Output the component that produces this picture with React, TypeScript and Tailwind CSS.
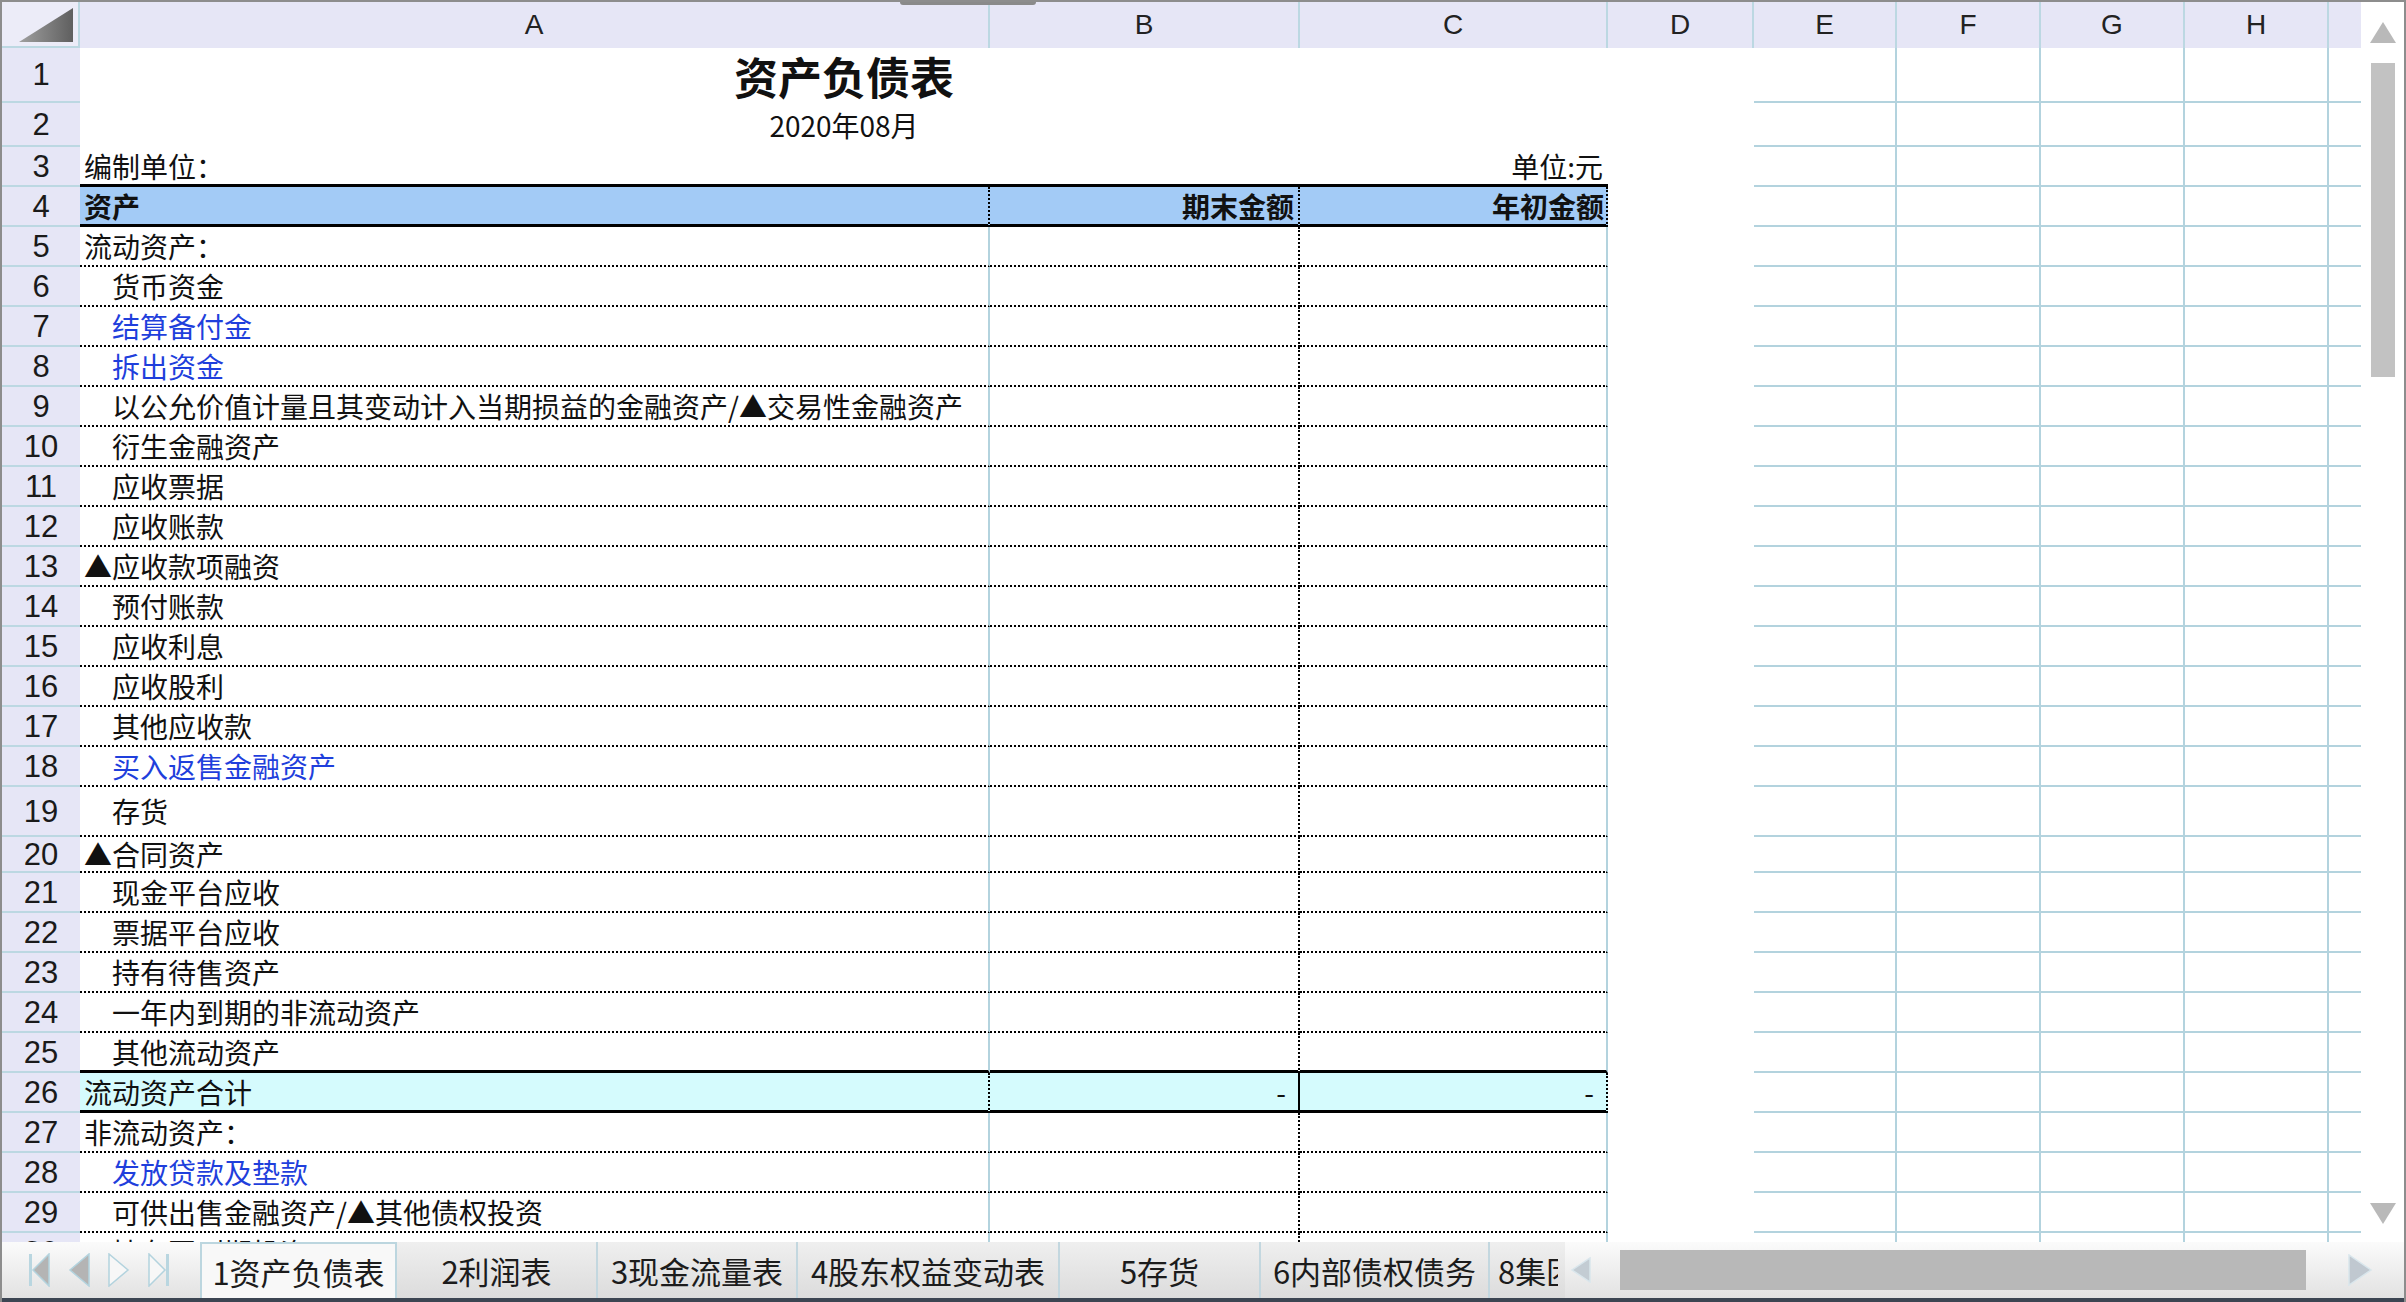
import React from 'react';

type Kind = 'title' | 'date' | 'unit' | 'head' | 'item' | 'total';

interface SheetRow {
  n: number;
  h: string;
  kind: Kind;
  text?: string;
  indent?: boolean;
  blue?: boolean;
  thick?: boolean;
}

const rows: SheetRow[] = [
  { n: 1, h: 'h-[55px]', kind: 'title' },
  { n: 2, h: 'h-[44px]', kind: 'date' },
  { n: 3, h: 'h-[40px]', kind: 'unit' },
  { n: 4, h: 'h-[40px]', kind: 'head' },
  { n: 5, h: 'h-[40px]', kind: 'item', text: '流动资产：' },
  { n: 6, h: 'h-[40px]', kind: 'item', text: '货币资金', indent: true },
  { n: 7, h: 'h-[40px]', kind: 'item', text: '结算备付金', indent: true, blue: true },
  { n: 8, h: 'h-[40px]', kind: 'item', text: '拆出资金', indent: true, blue: true },
  { n: 9, h: 'h-[40px]', kind: 'item', text: '以公允价值计量且其变动计入当期损益的金融资产/▲交易性金融资产', indent: true },
  { n: 10, h: 'h-[40px]', kind: 'item', text: '衍生金融资产', indent: true },
  { n: 11, h: 'h-[40px]', kind: 'item', text: '应收票据', indent: true },
  { n: 12, h: 'h-[40px]', kind: 'item', text: '应收账款', indent: true },
  { n: 13, h: 'h-[40px]', kind: 'item', text: '▲应收款项融资' },
  { n: 14, h: 'h-[40px]', kind: 'item', text: '预付账款', indent: true },
  { n: 15, h: 'h-[40px]', kind: 'item', text: '应收利息', indent: true },
  { n: 16, h: 'h-[40px]', kind: 'item', text: '应收股利', indent: true },
  { n: 17, h: 'h-[40px]', kind: 'item', text: '其他应收款', indent: true },
  { n: 18, h: 'h-[40px]', kind: 'item', text: '买入返售金融资产', indent: true, blue: true },
  { n: 19, h: 'h-[50px]', kind: 'item', text: '存货', indent: true },
  { n: 20, h: 'h-[36px]', kind: 'item', text: '▲合同资产' },
  { n: 21, h: 'h-[40px]', kind: 'item', text: '现金平台应收', indent: true },
  { n: 22, h: 'h-[40px]', kind: 'item', text: '票据平台应收', indent: true },
  { n: 23, h: 'h-[40px]', kind: 'item', text: '持有待售资产', indent: true },
  { n: 24, h: 'h-[40px]', kind: 'item', text: '一年内到期的非流动资产', indent: true },
  { n: 25, h: 'h-[40px]', kind: 'item', text: '其他流动资产', indent: true, thick: true },
  { n: 26, h: 'h-[40px]', kind: 'total', text: '流动资产合计' },
  { n: 27, h: 'h-[40px]', kind: 'item', text: '非流动资产：' },
  { n: 28, h: 'h-[40px]', kind: 'item', text: '发放贷款及垫款', indent: true, blue: true },
  { n: 29, h: 'h-[40px]', kind: 'item', text: '可供出售金融资产/▲其他债权投资', indent: true },
  { n: 30, h: 'h-[40px]', kind: 'item', text: '持有至到期投资', indent: true },
];

const columns = [
  { id: 'A', w: 'w-[910px]' },
  { id: 'B', w: 'w-[310px]' },
  { id: 'C', w: 'w-[308px]' },
  { id: 'D', w: 'w-[146px]' },
  { id: 'E', w: 'w-[143px]' },
  { id: 'F', w: 'w-[144px]' },
  { id: 'G', w: 'w-[144px]' },
  { id: 'H', w: 'w-[144px]' },
];

const tabs = [
  { label: '1资产负债表', w: 'w-[197px]' },
  { label: '2利润表', w: 'w-[201px]' },
  { label: '3现金流量表', w: 'w-[200px]' },
  { label: '4股东权益变动表', w: 'w-[262px]' },
  { label: '5存货', w: 'w-[201px]' },
  { label: '6内部债权债务', w: 'w-[229px]' },
];

// border pieces (mixed styles per side)
const B_DOT = 'border-b-2 border-b-black [border-bottom-style:dotted]';
const B_THICK = 'border-b-[3px] border-b-black';
const R_BLUE = 'border-r-2 border-r-[#b3d3de]';
const R_DOT = 'border-r-2 border-r-black [border-right-style:dotted]';
const R_SOLID = 'border-r-2 border-r-black';

const cell = 'h-full shrink-0 flex items-center whitespace-nowrap';

function DataCells({ row }: { row: SheetRow }) {
  switch (row.kind) {
    case 'title':
      return (
        <div className={`${cell} w-[1528px] justify-center text-[44px] font-bold`}>资产负债表</div>
      );
    case 'date':
      return <div className={`${cell} w-[1528px] justify-center`}>2020年08月</div>;
    case 'unit':
      return (
        <>
          <div className={`${cell} w-[910px] pl-[4px] ${B_THICK}`}>编制单位：</div>
          <div className={`${cell} w-[310px] ${B_THICK}`} />
          <div className={`${cell} w-[308px] justify-end pr-[5px] ${B_THICK}`}>单位:元</div>
        </>
      );
    case 'head':
      return (
        <>
          <div className={`${cell} w-[910px] pl-[4px] font-bold bg-[#a3cbf6] ${B_THICK} ${R_DOT}`}>资产</div>
          <div className={`${cell} w-[310px] justify-end pr-[4px] font-bold bg-[#a3cbf6] ${B_THICK} ${R_DOT}`}>期末金额</div>
          <div className={`${cell} w-[308px] justify-end pr-[2px] font-bold bg-[#a3cbf6] ${B_THICK} ${R_DOT}`}>年初金额</div>
        </>
      );
    case 'total':
      return (
        <>
          <div className={`${cell} w-[910px] pl-[4px] bg-[#d5fbfd] ${B_THICK} ${R_DOT}`}>{row.text}</div>
          <div className={`${cell} w-[310px] justify-end pr-[12px] bg-[#d5fbfd] ${B_THICK} ${R_SOLID}`}>-</div>
          <div className={`${cell} w-[308px] justify-end pr-[12px] bg-[#d5fbfd] ${B_THICK} ${R_DOT}`}>-</div>
        </>
      );
    default: {
      const bottom = row.thick ? B_THICK : B_DOT;
      return (
        <>
          <div
            className={`${cell} w-[910px] ${row.indent ? 'pl-[32px]' : 'pl-[4px]'} ${
              row.blue ? 'text-[#1f3fdc]' : ''
            } ${bottom} ${R_BLUE}`}
          >
            {row.text}
          </div>
          <div className={`${cell} w-[310px] ${bottom} ${R_DOT}`} />
          <div className={`${cell} w-[308px] ${bottom} ${R_BLUE}`} />
        </>
      );
    }
  }
}

function Row({ row }: { row: SheetRow }) {
  return (
    <div className={`flex shrink-0 ${row.h}`}>
      <div className="h-full w-[78px] shrink-0 flex items-center justify-center bg-[#e6e6f6] border-b-2 border-[#bcd8e2] font-['Liberation_Sans',sans-serif] text-[31px] text-[#1a1a1a]">
        {row.n}
      </div>
      <DataCells row={row} />
      <div className="h-full w-[146px] shrink-0" />
      <div className="h-full w-[143px] shrink-0 border-b-2 border-r-2 border-[#b3d3de]" />
      <div className="h-full w-[144px] shrink-0 border-b-2 border-r-2 border-[#b3d3de]" />
      <div className="h-full w-[144px] shrink-0 border-b-2 border-r-2 border-[#b3d3de]" />
      <div className="h-full w-[144px] shrink-0 border-b-2 border-r-2 border-[#b3d3de]" />
      <div className="h-full w-[32px] shrink-0 border-b-2 border-[#b3d3de]" />
    </div>
  );
}

function NavFirst() {
  return (
    <svg width="22" height="34" viewBox="0 0 22 34">
      <rect x="1" y="1" width="3" height="32" fill="#b9d6e0" />
      <polygon points="21,1 21,33 5,17" fill="#b4b4b4" stroke="#b3d3de" strokeWidth="1.5" />
    </svg>
  );
}

function NavPrev() {
  return (
    <svg width="22" height="34" viewBox="0 0 22 34">
      <polygon points="21,1 21,33 2,17" fill="#b4b4b4" stroke="#b3d3de" strokeWidth="1.5" />
    </svg>
  );
}

function NavNext() {
  return (
    <svg width="22" height="34" viewBox="0 0 22 34">
      <polygon points="1,1 1,33 20,17" fill="#f7f7f7" stroke="#b3d3de" strokeWidth="1.5" />
    </svg>
  );
}

function NavLast() {
  return (
    <svg width="22" height="34" viewBox="0 0 22 34">
      <polygon points="1,1 1,33 17,17" fill="#f7f7f7" stroke="#b3d3de" strokeWidth="1.5" />
      <rect x="18" y="1" width="3" height="32" fill="#b9d6e0" />
    </svg>
  );
}

export default function App() {
  return (
    <div className="relative w-[2406px] h-[1302px] flex flex-col bg-white overflow-hidden border-l-2 border-t-2 border-r-2 border-[#8d8d8d] font-['Noto_Sans_CJK_SC',sans-serif] text-[28px] text-[#111] leading-none">
      {/* top handle */}
      <div className="absolute left-[898px] -top-[2px] w-[136px] h-[5px] rounded-b-[3px] bg-[#8a8a8a]" />

      <div className="flex h-[1240px] shrink-0">
        {/* sheet */}
        <div className="w-[2359px] shrink-0 flex flex-col overflow-hidden">
          {/* column headers */}
          <div className="flex h-[46px] shrink-0 font-['Liberation_Sans',sans-serif] text-[28px] text-[#222]">
            <div className="w-[78px] h-full shrink-0 flex items-end justify-end pr-[5px] pb-[4px] bg-[#ececf8] border-r-2 border-b-2 border-[#bcd8e2]">
              <svg width="54" height="34" viewBox="0 0 54 34">
                <defs>
                  <linearGradient id="corner" x1="0" y1="0" x2="1" y2="0">
                    <stop offset="0" stopColor="#a0a0a0" />
                    <stop offset="1" stopColor="#5f5f5f" />
                  </linearGradient>
                </defs>
                <polygon points="54,0 54,34 0,34" fill="url(#corner)" />
              </svg>
            </div>
            {columns.map((c) => (
              <div
                key={c.id}
                className={`${c.w} h-full shrink-0 flex items-center justify-center bg-[#e6e6f6] border-r-2 border-[#bcd8e2]`}
              >
                {c.id}
              </div>
            ))}
            <div className="w-[32px] h-full shrink-0 bg-[#e6e6f6]" />
          </div>

          {rows.map((r) => (
            <Row key={r.n} row={r} />
          ))}
        </div>

        {/* vertical scrollbar */}
        <div className="flex-1 flex flex-col items-center pt-[20px] pb-[18px] bg-white">
          <svg width="26" height="21" viewBox="0 0 26 21">
            <polygon points="13,0 26,21 0,21" fill="#b9b9b9" />
          </svg>
          <div className="mt-[20px] w-[24px] h-[314px] bg-[#c2c2c2]" />
          <div className="flex-1" />
          <svg width="26" height="21" viewBox="0 0 26 21">
            <polygon points="0,0 26,0 13,21" fill="#b9b9b9" />
          </svg>
        </div>
      </div>

      {/* sheet tabs */}
      <div className="flex h-[56px] shrink-0 bg-linear-to-b from-[#fbfbfb] to-[#e2e2e2] text-[31px] text-[#1c1c1c]">
        <div className="w-[198px] h-full shrink-0 flex items-center pl-[26px] gap-[18px]">
          <NavFirst />
          <NavPrev />
          <NavNext />
          <NavLast />
        </div>
        {tabs.map((t, i) =>
          i === 0 ? (
            <div
              key={t.label}
              className={`${t.w} h-full shrink-0 flex items-center justify-center bg-[#f8f8f8] border-x-2 border-t-2 border-[#bcd6df]`}
            >
              {t.label}
            </div>
          ) : (
            <div
              key={t.label}
              className={`${t.w} h-full shrink-0 flex items-center justify-center bg-linear-to-b from-[#efefef] to-[#dcdcdc] border-r-2 border-[#c3d7df]`}
            >
              {t.label}
            </div>
          )
        )}
        <div className="w-[75px] h-full shrink-0 flex items-center pl-[8px] overflow-hidden whitespace-nowrap bg-linear-to-b from-[#efefef] to-[#dcdcdc]">
          <span className="w-[60px] overflow-hidden shrink-0">8集团往来</span>
        </div>
        <div className="flex-1 h-full flex items-center pl-[6px]">
          <svg width="20" height="26" viewBox="0 0 20 26">
            <polygon points="19,1 19,25 1,13" fill="#c3ccd3" stroke="#d9e6ec" strokeWidth="1.5" />
          </svg>
          <div className="ml-[29px] w-[686px] h-[40px] bg-[#b8b8b8]" />
          <div className="ml-[42px]">
            <svg width="24" height="32" viewBox="0 0 24 32">
              <polygon points="1,1 1,31 23,16" fill="#c0c8d0" stroke="#d9e6ec" strokeWidth="1.5" />
            </svg>
          </div>
        </div>
      </div>
      <div className="h-[4px] shrink-0 bg-[#3c4552]" />
    </div>
  );
}
